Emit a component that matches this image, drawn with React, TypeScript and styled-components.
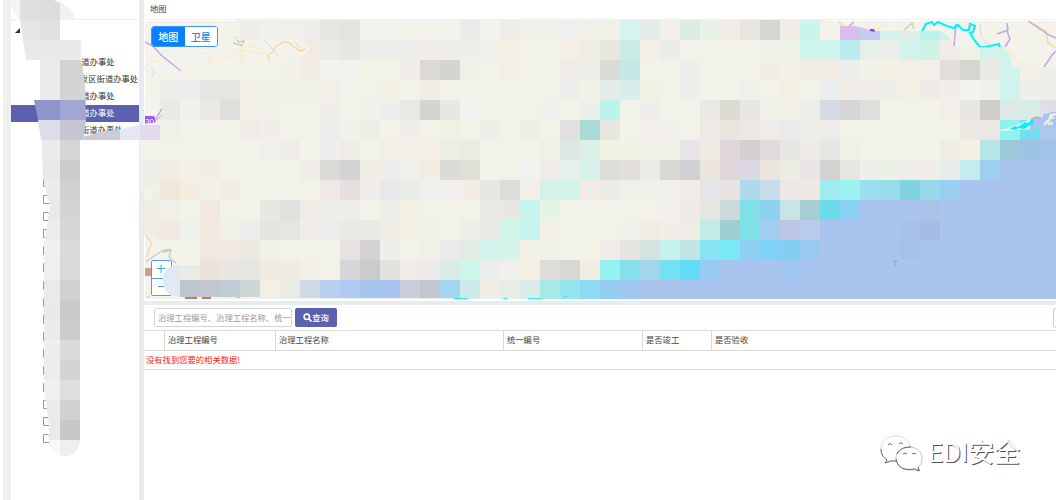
import React from "react";
import styled, { createGlobalStyle } from "styled-components";

const Global = createGlobalStyle`
  * { box-sizing: border-box; }
  body { margin: 0; background: #fff; overflow: hidden; }
`;

const Page = styled.div`
  position: relative;
  display: flex;
  width: 1056px;
  height: 500px;
  overflow: hidden;
  background: #fff;
  color: #444;
  font: 8.3px/1 "Noto Sans CJK SC", sans-serif;
`;
const Rail = styled.div`
  width: 8px;
  margin-left: 3px;
  background: #f0f0f0;
`;
const Sidebar = styled.aside`
  width: 128px;
  overflow: hidden;
`;
const SideHeader = styled.div`
  height: 20px;
  border-bottom: 1px solid #eee;
`;
const TreeRoot = styled.div`
  height: 34px;
  padding: 5px 0 0 4px;
`;
const TreeRow = styled.div<{ $active?: boolean; $indent?: number }>`
  display: flex;
  align-items: center;
  height: 17px;
  padding-left: ${(p) => p.$indent ?? 62}px;
  padding-bottom: 2px;
  white-space: nowrap;
  color: ${(p) => (p.$active ? "#fff" : "#333")};
  background: ${(p) => (p.$active ? "#5a62b0" : "transparent")};
`;
const Files = styled.div`
  display: flex;
  flex-direction: column;
  padding: 39px 0 0 32px;
`;
const FileRow = styled.div`
  height: 17.1px;
`;
const Splitter = styled.div`
  width: 5px;
  background: #e4ecf2;
`;
const Main = styled.main`
  flex: 1;
  min-width: 0;
  display: flex;
  flex-direction: column;
`;
const Title = styled.header`
  height: 20px;
  padding: 4px 0 0 6px;
  border-bottom: 1px solid #eee;
`;
const MapPane = styled.section`
  height: 280px;
  padding: 1px 0 1px 1px;
  display: flex;
`;
const MapSvg = styled.svg`
  display: block;
  flex: none;
`;
const Divider = styled.div`
  height: 5px;
  border-top: 1px solid #fff;
  background: #e4edf2;
`;
const Toolbar = styled.div`
  display: flex;
  align-items: center;
  gap: 3px;
  height: 25px;
  padding-left: 10px;
`;
const Search = styled.div`
  flex: none;
  width: 138px;
  height: 19px;
  padding: 0 3px;
  border: 1px solid #d5d5d5;
  border-radius: 2px;
  color: #999;
  line-height: 17px;
  white-space: nowrap;
  overflow: hidden;
`;
const Button = styled.div`
  flex: none;
  display: flex;
  align-items: center;
  justify-content: center;
  width: 42px;
  height: 19px;
  border-radius: 2px;
  background: #5a62b0;
  color: #fff;
  font-weight: 500;
`;
const Side = styled.div`
  flex: none;
  width: 30px;
  height: 20px;
  margin-left: 713px;
  border: 1px solid #ccc;
  border-radius: 3px;
`;
const HeadRow = styled.div`
  display: flex;
  height: 21px;
  border: solid #dcdcdc;
  border-width: 1px 0;
`;
const Cell = styled.div<{ $w?: number }>`
  width: ${(p) => (p.$w ? `${p.$w}px` : "auto")};
  padding-left: 3px;
  line-height: 17px;
  border-right: ${(p) => (p.$w ? "1px solid #d8d8d8" : "none")};
`;
const Empty = styled.div`
  height: 19px;
  padding-left: 2px;
  line-height: 17px;
  color: #f22;
  border-bottom: 1px solid #ddd;
`;
const Overlay = styled.svg`
  position: absolute;
  inset: 0;
  pointer-events: none;
`;
const TypeSwitch = styled.div`
  position: absolute;
  left: 151px;
  top: 26px;
  display: flex;
  width: 67px;
  height: 21px;
  border: 1px solid #3d96f8;
  border-radius: 3px;
  overflow: hidden;
  background: #fff;
  font-size: 10px;
  font-weight: 500;
`;
const TypeItem = styled.div<{ $on?: boolean }>`
  flex: 1;
  line-height: 20px;
  text-align: center;
  color: ${(p) => (p.$on ? "#fff" : "#2287f5")};
  background: ${(p) => (p.$on ? "#0a80ff" : "#fff")};
`;
const Zoom = styled.div`
  position: absolute;
  left: 151px;
  top: 260px;
  width: 21px;
  height: 36px;
  border: 1px solid #4a9ff8;
  border-radius: 2px;
  background: #fff;
`;
const ZoomKey = styled.div`
  height: 17px;
  padding: 4px 0 0 5px;
  & + & { border-top: 1px solid #4a9ff8; }
`;
const Watermark = styled.div`
  position: absolute;
  left: 880px;
  top: 431px;
  display: flex;
  align-items: center;
  gap: 5px;
  color: #fff;
  font-size: 26px;
  line-height: 40px;
  font-weight: 400;
  white-space: nowrap;
  text-shadow: 1px 1px 0 #555;
`;
const WatermarkText = styled.span`
  padding-bottom: 2px;
  letter-spacing: -0.2px;
`;

const SEA = "a9c4ee";
/* One line per 20px band of the map; "column:colour" or "first-last:colour". */
const BANDS = [
  "5:efeeea 6:f1f0ec 7:f0efec 8:efeeeb 9:e5e6df 10:e1e4df 11-12:f1f3ec 13-15:f2f2e9 16:ebebea 17:f1f3ed 18:f0ede9 19-20:f1f1e9 21:eff0ed 22-23:f0f0e7 24:d7f3ee 25:e2ece8 26:f3eee7 27:dcede4 28:e8f2e6 29:f0ece8 30:e8e5e0 31:d6d6d1 32:f0ede7 33:c9f5ed",
  "8:f1ece1 9:ebebe6 10:e6e6e2 11:ededeb 12:eeedeb 13:eeedec 14:f1ede8 15:eeede9 16:efeee9 17:f2f0ea 18:f3efe2 21:f4f0e8 22:f0ede4 23:e8e8df 24:cbece4 25:f3efe8 26:ebebe8 27-30:f2f2e9 31:f1f0e9 32:ecf2e7 33-34:cdf5ec 35:bcebed 36:e4f0e8 37:ecede9 38:d1f3eb 39:d1f3e6 40:f0ede6 41:eff2e6 42-43:d1f3ec",
  "7:f2f1e9 8:f2eee6 9-10:f1f3ec 11-12:f2f2e6 13:f0ece8 14:dcd8d4 15:d4d4d1 16:eff0e6 17:f2f2e9 18:f3efe7 19-20:f2f2e9 21:f0ece9 22:eeede8 23:d9dcd6 24:c5e8e5 25-26:f2f2e9 27:efeeeb 28-30:f2f2e9 31:f2eee6 32:f2f0e8 33-34:f2eee7 35:eeeeed 36:f1f1e8 37:f2f1e3 38-39:f1efe7 40:e2dedb 41:d5d6d0 42:ebeae2 43:cff4ed 44:f1f0e9 45:efeeeb",
  "1:eceeea 2:ececeb 3:e5e5e4 4:e4e6e0 5:f2eee8 6-8:f1f1e9 9:f3efe8 10:f0f2ec 12:f3f0e4 14:f0ece6 20:f2f2eb 21:efeeec 22:f1f1e8 23:e2ede8 24:d9edec 25:f2f2e4 27:efeeeb 30:f0efea 31:f2f2e9 32:f3f0e3 34:ebeeec 35:f0ece8 36:efece8 37:eeeeeb 38:f2efe4 39:eeebe6 40:f1ede8 41:f1f3ec 42:f2f1e9 43:cff4ed 44-45:f0eeea",
  "1:e8e8e4 2:f1f0ec 3:ebe7e3 4:e0deda 5:f2efe7 6:f0f1e9 9:eeedea 11:f1f0ea 12:eeeeea 13:e8e8e5 14:d4d4d0 15:e6e8e2 16:f1f3ee 20:eff1ee 22:eaf1e8 23:bcf3ec 25:efeeeb 28:e9e8e4 29:dcdcd5 30:e8e7e3 31-32:f0f0e6 33:ebede6 34:d4dbe5 35:d7d5d7 36:dddfdb 40:f1efe8 41:e7e6e2 42:cfcfc9 43:dde9e6 44:d6ece6 45:dee0e6",
  "1:f0f0e9 5:f0ebe7 6:f1ede8 9:eeecea 10:f1f1e9 11:ecede5 13:efeeec 15:f1f1e3 17:edefe9 19:eeeee6 21:e2e1e0 22:aad9d7 23:e8e8e0 25:f4efea 26:f0efec 28:ede9e4 29:e9e6df 30:ede7e4 31:efebe8 32:ebeaeb 33:ededea 34:eeebe8 41:ece9e4 42:ece7e2 43:8cf3ee 44:73def0 45:b0c7ee",
  "0-5:f1f3eb 6:efefec 7:efece8 8:f3f3e8 9:eeeeec 10:eeece4 11:f1f2ea 12:f3efe6 13-14:f4efe8 15:ecede5 16:ebebe3 20:f0f0e7 21:dee7e6 22:dbeee7 23-24:f2f2e3 25-26:f0f0e7 27:e6e4e8 28:f0ebe0 29:e0d5db 30:d3cfd0 31:e1dada 32:e8e7e3 33:eeeae6 34:e5e7e5 35:eff0e8 40:efece6 41:f4f0e3 42:b6e5e5 43:9bc9da 44:9dc3e5 45:a2c4eb",
  `0:eeede8 1:f1ede4 2:f1f0e3 3:f1ede5 8:f0ece8 9:d9dad5 10:d4d4d2 11:f0ede4 12:efeeec 13:f1f1ec 14:f3ece2 15:dbdbd7 16:dedfd7 17:f3f3e9 19:f1f2ed 20:f0ebe8 21:e7f0eb 22:d7f2ed 23:dcddda 24:e2dfda 25:edebe7 26:d9d9d4 27:d1d1d3 28:ebe4df 29:e2d7dc 30:dcd9e5 31:ede5df 32:ecebe4 33:e8e5e4 34:d3d2d0 35:e6e6e0 36:edefe8 37:ecf1e6 38:eeede7 39:f0ede6 40:e7eeea 41:c5ecec 42:9ecff2 43-45:${SEA}`,
  `0:efefe8 1:f1e6da 2:f3ecdf 3:f1efe6 4:f2ece6 9:efe8e4 10:e5dfe1 11:f0ece9 12:e8e8eb 13:eaecea 14:eff0eb 15:f0efed 16:f3ede6 17:e6e6e4 18:dcdcd9 19:f3eee7 20:d6f1e7 21:d2f4ed 22:f1ede6 23:ecebe7 24-26:f0f0e8 27:f1ede6 28:e5e4e9 29:e6e3e2 30:afdaee 31:c9dcea 32:ece6e6 33:eee8e5 34:9eebf0 35:9bf2f1 36:9cdff0 37:98dbea 38:80d4df 39:98daeb 40:9acff2 41-45:${SEA}`,
  `0:eeeee7 1:f0efe8 3:f2e8dd 6:e8e8e0 7:e0e0df 8:efece8 9:eceeea 10:ededea 12:f0eeeb 13:f2f1e3 17:e8e8e5 18:e7e8e2 19:c7f4ed 20:e5f2e6 26:f1f0ed 27:eee9e5 28:e4e6e2 29:cbdad9 30:80dfe7 31:8dd2ef 32:c8e5e6 33:a7cdd4 34:6edbe9 35:8bd2f4 36-45:${SEA} 39:a8c2e8`,
  `0:f0ebe5 1:f1e9df 2:eff0e9 3:f3eadf 4:f0f0e7 5:ececeb 6:e5e5e0 7:e7e5df 8:f0ece8 9:ebecec 10-11:e9eae4 12:f0ede7 13:f2f0e2 14:f1f1e7 16:efede9 17:e8ebe4 18:cff4ea 19:c4f4ec 20:f2f0e4 24:f0f1ec 25:f0ece5 26:f2ede6 27:efece5 28:c4eae7 29:a0cfd1 30:80e1e9 31:a3cdef 32:bdc7e6 33:bbcbed 34-45:${SEA} 38:a8c1e8 39:a6bce5`,
  `3:f0e8e3 4:f1e8e2 5:ebe9e2 6:f0f0e9 10:e7e3e0 11:d3d1d2 12:efeeea 14:f0f0e9 15:ebeaea 16:e2ece3 17:d1f3ec 18:d5f3ea 19-20:f2f1e5 22:f3f3e5 23:f0ebe8 24:e6e4df 25:d2e3e0 26:c6f1ec 27:c1e5e6 28:87e3f2 29:79e9f5 30:8ed0f3 31:7dd2f5 32:84cff1 33:99c9f1 34-45:${SEA} 37:a8c3eb 38:a7c0e9`,
  `3:ebe2da 4:e9e7e2 5:e6e5df 6:f0eae2 7:efebe4 8:f1efe7 10:d4d6d9 11:c9cbcf 12:e2e2df 13:f0ebe6 14:ecebe9 15:d9ebe7 16:cff5ec 17:eceeea 18:eff0ec 19:f4f0e3 20:dddeda 21:d7d8d4 22:f1ede6 23:96f2ef 24:87dfec 25:a1d7e8 26:75e2f3 27:63dcf6 28:9acaf0 29-45:${SEA} 32:a0c7ef`,
  `6:f3efe5 7:ebebe5 8:cfd9e6 9:b8ceef 10:afc9f0 11-12:a8c5f0 13:c9cfdb 14:c1c7d0 15:a3d6ef 16:cdebea 17:f0ede4 18:e7ece5 19:dbebea 20:aae9ea 21:96e5ef 22:8ddaf2 23:94cbf0 24:a0c7ee 25-45:${SEA}`,
];

type Tile = { x: number; y: number; w: number; h: number; fill: string };
const tiles: Tile[] = BANDS.flatMap((band, r) =>
  band.split(" ").map((item) => {
    const [span, hex] = item.split(":");
    const [a, b = a] = span.split("-").map(Number);
    return { x: 140 + a * 20, y: 20 + r * 20, w: (b - a + 1) * 20, h: r === 13 ? 19 : 20, fill: `#${hex}` };
  })
);

const COLUMN = ["d2d2d2", "d4d4d4", "", "", "d5d5d5", "cbcbcb", "d1d1d1", "d4d4d4", "d6d6d6", "dadada", "d9d9d9", "d1d1d1", "cacaca", "cccccc", "dbdbdb", "d4d4d4", "dedede", "d1d1d1", "c8c8c8", "efefef"];
const COLUMN_LIGHT = ["ebebeb", "ebebeb", "", "", "ebebeb", "e8e8e8", "ebebeb", "e9e9e9", "ececec", "f0f0f0", "efefef", "eaeaea", "e9e9e9", "ebebeb", "eeeeee", "ececec", "f0f0f0", "ebebeb", "eaeaea", "f8f8f8"];

const Roads = () => (
  <MapSvg width="911" height="278" viewBox="145 21 911 278" fill="none">
    <rect x="145" y="21" width="911" height="278" fill="#f3f3eb" />
    <g stroke="#f7edb8" strokeWidth="1.2">
      <path d="M145 67l7-5 10-2M197 51l5 3 10-1-4 12-7-2M208 65l15-5 14-8 6-2 24 4M243 50l-2 6 3 9M243 48l9-3 7 4M1002 47l11 8 3 6 12 5 7 3M146 295l7-8" />
      <path d="M877 30l6-6M911 21l6 5M937 23l5 3" />
    </g>
    <g stroke="#f8d79c" strokeWidth="1.4">
      <path d="M269 61l-1-6 5-3 2-5 8-5h5l10 8 4 1 3-3M549 54l5 5M146 236l6 7-3 6-2 8M1030 22l16 9 2 12 8 5M838 21l5 5" />
    </g>
    <g stroke="#c5a5e5" strokeWidth="1.5">
      <path d="M145 42l8 4 8 9 20 16M154 124l3-7 6-10M954 46l2-22M997 34l11-4-1-7M1007 31l3 8-5 8M1028 21l12 8 9 6 7 3M1044 67l8-12 4-4M849 26l5-4" />
    </g>
    <path d="M264 41l4 2 10 13M151 68l3 4-2 5M294 41l6 7M980 24l1 12 9 9" stroke="#c9dfe9" />
    <path d="M235 37l4 5 5-1-3 6M233 43l8 2M904 30l8-7 2 6M157 120l6-6 1 6M146 262l8-6 10-6 7-1-2 8 7 6M163 252l9-2" stroke="#cbcbc6" strokeWidth="1.3" />
    <path d="M922 31l4-7 6-2 2 3 4-3 9 4 7 2 4-3 5 5h6l1-6 5 2-2 6-3 1 5 8 5 6h5l14-3 1 5-3 4" stroke="#00f4ff" strokeWidth="2.2" />
    <path d="M1030 119l8-4 18-5v30h-26z" fill="#a9c4ee" />
    <path d="M1034 117l9-1M1044 125l5-5 2-5 5-1M1048 124l5-1M1050 117l4 1" stroke="#eeeee4" strokeWidth="2.500" />
    <path d="M1031 118l10-1M1035 116l3 3" stroke="#b7a3b5" />
    <rect x="145" y="268" width="6" height="8" fill="#d3a18b" />
    <path d="M185 298h12M190 296v3M202 298h9" stroke="#c07c5b" strokeWidth="2" />
    <path d="M146 298l4-2M236 298l5-1" stroke="#cbcbc6" />
    <path d="M528 299l40-4 40-3 56-7h30v14z" fill="#a9c4ee" />
    <rect x="139" y="116" width="16" height="9" rx="2" fill="#9b55f5" />
    <text x="145" y="123.5" fill="#fff" fontSize="8" fontFamily="Liberation Sans">30</text>
  </MapSvg>
);

const Mosaic = () => (
  <Overlay width="1056" height="500" viewBox="0 0 1056 500">
    <defs>
      <clipPath id="mapClip">
        <path d="M236 20H826V40H922V47H1002C1009 50 1012 60 1013 67H1056V111L1036 116 1026 121 1008 128 1000 131 1034 129 1036 126 1040 129H1056V299H528L440 298H260V280H200V265L172 250C160 238 155 237 148 235L140 236V125L158 122 164 112 160 105C147 103 146 80 162 74L200 70 300 57 310 50 303 40 236 40z" />
      </clipPath>
      <clipPath id="columnClip">
        <path d="M38 60H81Q87 85 86 120L81 145 80 440Q78 456 65 456Q51 456 49 442V425L44 390V245L50 207 43 178 42 150z" />
      </clipPath>
    </defs>
    <g clipPath="url(#mapClip)" shapeRendering="crispEdges">
      <path d="M140 20H826V40H922V47H1056V299H140z" fill="#f2f2e9" />
      {tiles.map((t, i) => (
        <rect key={i} x={t.x} y={t.y} width={t.w} height={t.h} fill={t.fill} />
      ))}
    </g>
    <path d="M840 26h15l5 1v13h-20z" fill="#d8bfef" />
    <path d="M860 27l14 4h6v9h-20z" fill="#cbcbf1" />
    <path d="M870 29h4l1 3-5-1z" fill="#8a3ff0" />
    <path d="M880 31h20v9h-20z" fill="#d4f3ec" />
    <path d="M900 31h20v9h-20z" fill="#deeee6" />
    <path d="M920 31h20v9h-20z" fill="#bbf3ec" />
    <path d="M940 32q8 2 10 8h-10z" fill="#c8f3ea" />
    <g shapeRendering="crispEdges">
      <path d="M920 40h20v7h-20z" fill="#d1f3e6" />
      <path d="M940 40h12l-2 7h-10z" fill="#f0ede6" />
    </g>
    <path d="M1009 129l6-3 3 1 7-5 3 1 5-4 1 4-7 4-3 2-6-1-2 2z" fill="#00f4ff" />
    <path d="M990 132l18-3" stroke="#f6eedc" />
    <path d="M139 192l5-1V204h-5z" fill="#e4ecf2" />
    <path d="M144 191l10-4q0 9-10 17z" fill="#f5f3e5" />
    <path d="M892 261h6M895 261v4M894 265h3" stroke="#8da8d2" />
    <path d="M528 298.5h14M503 298.5h4M454 298.5h14M563 297l5-1" stroke="#22f0f5" />

    <path d="M180 265H200V280H180z" fill="#e9ebe6" />
    <path d="M180 265H174Q162 269 163 282Q164 296 180 297z" fill="#e0eaf2" />
    <g shapeRendering="crispEdges">
      <path d="M180 280h20v17h-20z" fill="#bec6cf" />
      <path d="M200 280h20v17h-20z" fill="#c3c8d0" />
      <path d="M220 280h20v17h-20z" fill="#c0cbd4" />
      <path d="M240 280h20v17h-20z" fill="#cdd7d8" />
    </g>

    <path d="M10 0H20V20Q12 13 10 0z" fill="#f4f4f4" />
    <path d="M20 0H40V20H20z" fill="#dfdfdf" />
    <path d="M40 0H54L60 3V20H40z" fill="#dcdcdc" />
    <path d="M54 0Q70 4 76 20H60V3z" fill="#f1f1f1" />
    <path d="M20 20H40V40H23z" fill="#e6e6e6" />
    <path d="M40 20H60V40H40z" fill="#e1e1e1" />
    <path d="M23 40H80V60H26z" fill="#e9e9e9" />
    <path d="M80 40H82V60H80z" fill="#f3f3f3" />
    <g clipPath="url(#columnClip)" shapeRendering="crispEdges">
      {COLUMN.map((c, i) => c && <rect key={i} x="60" y={60 + i * 20} width={i < 2 ? 27 : 20} height="20" fill={`#${c}`} />)}
      {COLUMN_LIGHT.map((c, i) => c && <rect key={i} x="40" y={60 + i * 20} width="20" height="20" fill={`#${c}`} />)}
    </g>
    <path d="M34 100H60V120H38z" fill="#8f96cb" />
    <path d="M60 100H85.500L86 120H60z" fill="#a1a6d3" />
    <path d="M38 120H60V140H41z" fill="#dcdde8" />
    <path d="M60 120H86L84 137 80 140H60z" fill="#c5c6d2" />
    <path d="M80 138L100 132V140H80z" fill="#c9cad6" />
    <path d="M100 132L120 129V140H100z" fill="#cbccd6" />
    <path d="M120 129L140 125V140H120z" fill="#e5e8f2" />
    <path d="M140 125H160V140H140z" fill="#e2daed" />
  </Overlay>
);

const FileIcon = () => (
  <svg width="8" height="10" viewBox="0 0 8 10" fill="none" stroke="#999" style={{ display: "block" }}>
    <path d="M.5.5H5L7.500 3V8.500H.5z" />
  </svg>
);

const WeChat = () => (
  <svg width="43" height="40" viewBox="0 0 43 40" fill="none">
    <g fill="#fff" stroke="#aaa" strokeWidth=".7">
      <path d="M16 4C7 4 1 9 1 17c0 5 2 8 6 11l-2 3 7-2c12 2 18-3 18-12C30 9 25 4 16 4z" stroke="#ccc" />
      <path d="M29 15c-8 0-13 5-13 11s5 12 13 12c3 0 5 0 6-1l5 2-2-4c3-2 4-5 4-9 0-6-5-11-13-11z" />
    </g>
    <path d="M16 27c1 8 8 12 18 10l5 2-1-4M1 17c0 5 2 8 6 11l-2 3 6-2h6M17 22c3-6 9-7 14-7" stroke="#666" />
    <path d="M8 13q2-3 4 0M19 12q2-3 4 0M23 22q2-2 4 0M32 22q2-2 4 0" stroke="#666" />
  </svg>
);

export default function App() {
  return (
    <Page>
      <Global />
      <Rail />
      <Sidebar>
        <SideHeader />
        <TreeRoot>
          <svg width="5" height="5"><path d="M5 0V5H0z" fill="#333" /></svg>
        </TreeRoot>
        <TreeRow>街道办事处</TreeRow>
        <TreeRow $indent={69}>发区街道办事处</TreeRow>
        <TreeRow>街道办事处</TreeRow>
        <TreeRow $active>街道办事处</TreeRow>
        <TreeRow $indent={70}>街道办事处</TreeRow>
        <Files>
          {Array.from({ length: 16 }, (_, i) => (
            <FileRow key={i}><FileIcon /></FileRow>
          ))}
        </Files>
      </Sidebar>
      <Splitter />
      <Main>
        <Title>地图</Title>
        <MapPane><Roads /></MapPane>
        <Divider />
        <Toolbar>
          <Search>治理工程编号、治理工程名称、统一编号</Search>
          <Button>
            <svg width="9" height="9" viewBox="0 0 9 9" fill="none" stroke="#fff" strokeWidth="1.6">
              <circle cx="3.800" cy="3.800" r="2.700" />
              <path d="M6 6l2.500 2.500" />
            </svg>
            查询
          </Button>
          <Side />
        </Toolbar>
        <HeadRow>
          <Cell $w={21} />
          <Cell $w={111}>治理工程编号</Cell>
          <Cell $w={228}>治理工程名称</Cell>
          <Cell $w={139}>统一编号</Cell>
          <Cell $w={69}>是否竣工</Cell>
          <Cell>是否验收</Cell>
        </HeadRow>
        <Empty>没有找到您要的相关数据!</Empty>
      </Main>
      <Zoom>
        <ZoomKey>
          <svg width="9" height="9" style={{ display: "block" }}><path d="M0 3.500h8M4 0v8" stroke="#4a9ff8" /></svg>
        </ZoomKey>
        <ZoomKey>
          <svg width="9" height="9" style={{ display: "block" }}><path d="M1 3.500h6" stroke="#4a9ff8" /></svg>
        </ZoomKey>
      </Zoom>
      <Mosaic />
      <TypeSwitch>
        <TypeItem $on>地图</TypeItem>
        <TypeItem>卫星</TypeItem>
      </TypeSwitch>
      <Watermark>
        <WeChat />
        <WatermarkText>EDI安全</WatermarkText>
      </Watermark>
    </Page>
  );
}
